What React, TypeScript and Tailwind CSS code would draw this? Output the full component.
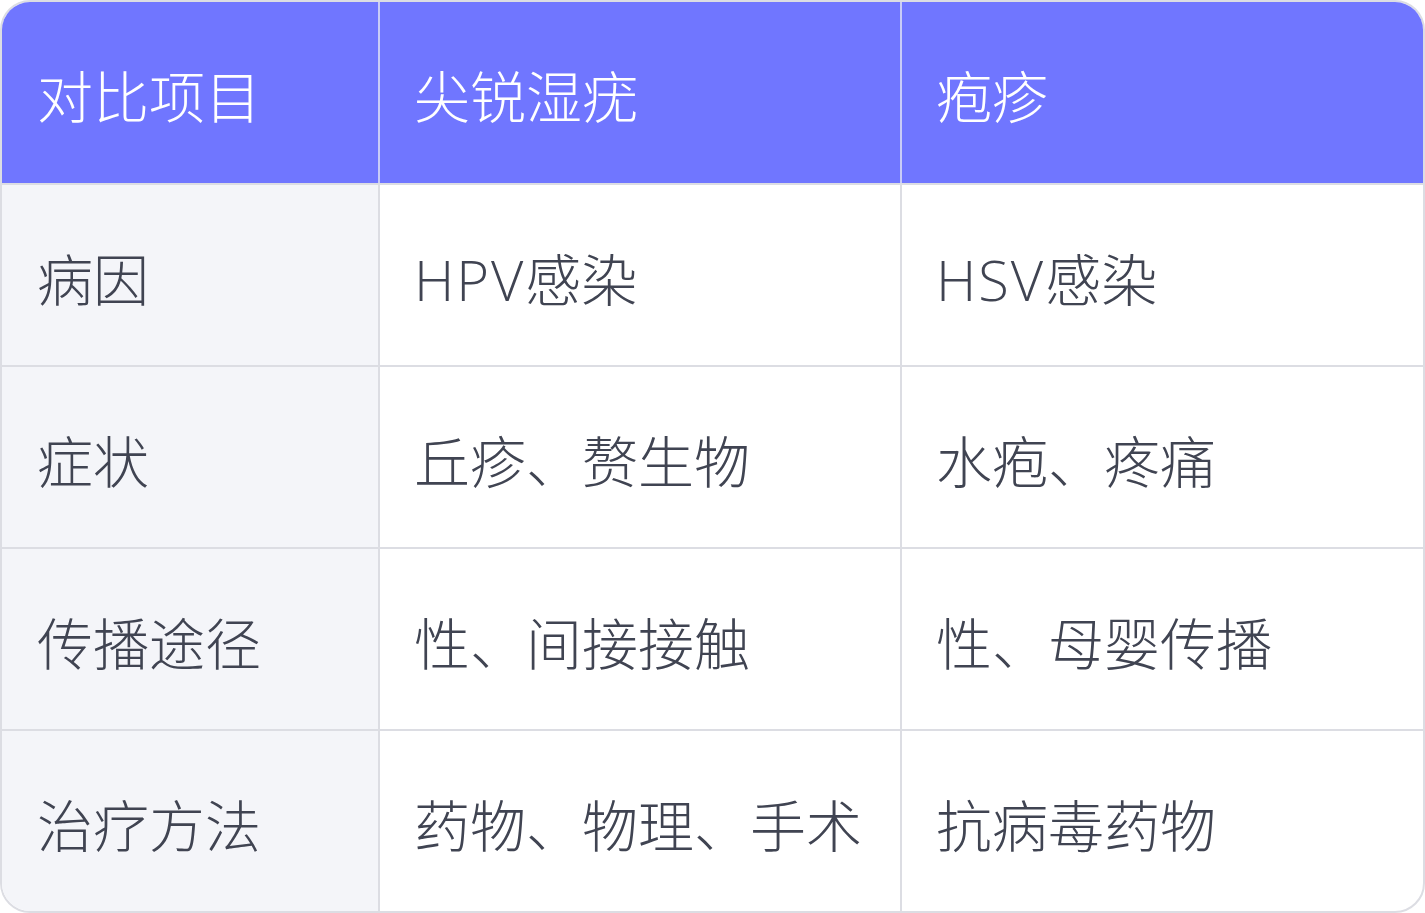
import React from "react";

const rows: [string, React.ReactNode, React.ReactNode][] = [
  ["病因", <><span className="tracking-[2px] font-extralight">HPV</span>感染</>, <><span className="tracking-[2px] font-extralight">HSV</span>感染</>],
  ["症状", "丘疹、赘生物", "水疱、疼痛"],
  ["传播途径", "性、间接接触", "性、母婴传播"],
  ["治疗方法", "药物、物理、手术", "抗病毒药物"],
];

const font = { fontFamily: '"Open Sans", "Noto Sans CJK SC", sans-serif' };

export default function App() {
  return (
    <div className="w-[1425px] h-[913px] bg-white" style={font}>
      <div className="w-full h-full border-2 border-[#dcdde3] rounded-[30px] overflow-hidden flex flex-col">
        <div className="h-[181px] flex bg-[#7076ff] text-white text-[56px] font-light">
          <div className="w-[376px] shrink-0 flex items-center pl-[35px] pt-[6px]">对比项目</div>
          <div className="w-[2px] shrink-0 bg-[#c9cbf7]" />
          <div className="w-[520px] shrink-0 flex items-center pl-[34px] pt-[6px]">尖锐湿疣</div>
          <div className="w-[2px] shrink-0 bg-[#c9cbf7]" />
          <div className="flex-1 flex items-center pl-[34px] pt-[6px]">疱疹</div>
        </div>
        {rows.map((r, i) => (
          <div key={i} className="flex flex-col">
            <div className="h-[2px] bg-[#dcdde3]" />
            <div className="h-[180px] flex text-[56px] font-light text-[#404452]">
              <div className="w-[376px] shrink-0 flex items-center pl-[35px] pt-[8px] bg-[#f4f5f9]">{r[0]}</div>
              <div className="w-[2px] shrink-0 bg-[#dcdde3]" />
              <div className="w-[520px] shrink-0 flex items-center pl-[34px] pt-[8px] whitespace-nowrap">{r[1]}</div>
              <div className="w-[2px] shrink-0 bg-[#dcdde3]" />
              <div className="flex-1 flex items-center pl-[34px] pt-[8px] whitespace-nowrap">{r[2]}</div>
            </div>
          </div>
        ))}
      </div>
    </div>
  );
}
